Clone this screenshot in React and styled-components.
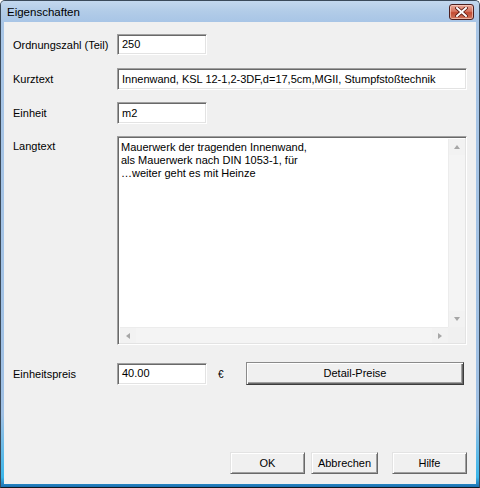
import React from "react";
import styled, { createGlobalStyle, css } from "styled-components";

const GlobalStyle = createGlobalStyle`
  html, body { margin: 0; padding: 0; background: #fff; }
  body { font-family: "Liberation Sans", Arial, sans-serif; }
  * { box-sizing: border-box; }
`;

const Window = styled.div`
  width: 480px;
  height: 488px;
  display: flex;
  flex-direction: column;
  background: linear-gradient(to bottom, #a9c6e6 0%, #9fc0e4 85%, #3ab6ea 98%, #1c6fb0 100%);
  border: 1px solid #3b4a5a;
  border-bottom-color: #101820;
  border-radius: 5px 5px 0 0;
  overflow: hidden;
`;

const TitleBar = styled.div`
  height: 21px;
  flex: none;
  display: flex;
  align-items: center;
  justify-content: space-between;
  padding: 0 5px 0 6px;
  background: linear-gradient(to bottom, #c3d8ee 0%, #b2cce8 50%, #a8c5e6 100%);
`;

const TitleText = styled.span`
  font-size: 11.5px;
  color: #000;
`;

const CloseButton = styled.div`
  width: 25px;
  height: 16px;
  margin-top: 1px;
  border: 1px solid #4c1f1f;
  border-radius: 3px;
  background: linear-gradient(to bottom, #e8a898 0%, #d6745f 45%, #c24a32 55%, #d0785e 100%);
  display: flex;
  align-items: center;
  justify-content: center;
  box-shadow: inset 0 0 0 1px rgba(255, 220, 210, 0.6);
`;

const Body = styled.div`
  flex: 1;
  margin: 0 3px 3px 3px;
  background: #f0f0f0;
  padding: 12px 9px 0 9px;
  display: flex;
  flex-direction: column;
  font-size: 11px;
  color: #000;
`;

const Row = styled.div`
  display: flex;
  align-items: ${(p) => (p.$top ? "flex-start" : "center")};
  margin-top: ${(p) => p.$gap || 0}px;
`;

const Label = styled.div`
  width: 104px;
  flex: none;
  padding-top: ${(p) => (p.$top ? 4 : 0)}px;
`;

const sunken = css`
  border-style: solid;
  border-width: 1px;
  border-color: #a0a0a0 #ffffff #ffffff #a0a0a0;
  box-shadow: inset 1px 1px 0 #696969, inset -1px -1px 0 #e3e3e3;
  background: #fff;
`;

const Field = styled.div`
  ${sunken}
  height: ${(p) => p.$h || 22}px;
  width: ${(p) => (p.$w ? `${p.$w}px` : "auto")};
  flex: ${(p) => (p.$w ? "none" : 1)};
  display: flex;
  align-items: center;
  padding: 0 4px 1px 4px;
  white-space: nowrap;
  overflow: hidden;
`;

const Memo = styled.div`
  ${sunken}
  flex: 1;
  height: 209px;
  display: grid;
  grid-template-columns: 1fr 17px;
  grid-template-rows: 1fr 16px;
  padding: 2px 1px 1px 2px;
`;

const MemoText = styled.div`
  padding: 2px 0 0 1px;
  line-height: 13px;
  white-space: pre;
  overflow: hidden;
`;

const VScroll = styled.div`
  background: #f4f4f4;
  display: flex;
  flex-direction: column;
  justify-content: space-between;
  border-left: 1px solid #ececec;
`;

const HScroll = styled.div`
  background: #f4f4f4;
  display: flex;
  justify-content: space-between;
  border-top: 1px solid #ececec;
`;

const Corner = styled.div`
  background: #f0f0f0;
`;

const ArrowBtn = styled.div`
  width: 16px;
  height: ${(p) => (p.$h ? 15 : 16)}px;
  display: flex;
  align-items: center;
  justify-content: center;
  background: #f2f2f2;
`;

const Tri = styled.span`
  width: 0;
  height: 0;
  border-style: solid;
  ${(p) =>
    p.$dir === "up" &&
    css`border-width: 0 3.5px 4px 3.5px; border-color: transparent transparent #a6a6a6 transparent;`}
  ${(p) =>
    p.$dir === "down" &&
    css`border-width: 4px 3.5px 0 3.5px; border-color: #a6a6a6 transparent transparent transparent;`}
  ${(p) =>
    p.$dir === "left" &&
    css`border-width: 3.5px 4px 3.5px 0; border-color: transparent #a6a6a6 transparent transparent;`}
  ${(p) =>
    p.$dir === "right" &&
    css`border-width: 3.5px 0 3.5px 4px; border-color: transparent transparent transparent #a6a6a6;`}
`;

const Euro = styled.span`
  width: 39px;
  flex: none;
  padding-left: 11px;
  padding-top: 2px;
  font-size: 10px;
`;

const Button = styled.button`
  font-family: "Liberation Sans", Arial, sans-serif;
  font-size: 11px;
  color: #000;
  background: #f0f0f0;
  height: ${(p) => p.$h || 22}px;
  width: ${(p) => (p.$w ? `${p.$w}px` : "auto")};
  flex: none;
  margin-left: ${(p) => p.$ml || 0}px;
  margin-right: ${(p) => p.$mr || 0}px;
  padding: 0 0 1px 0;
  border-style: solid;
  border-width: 1px;
  border-color: #e3e3e3 #696969 #696969 #e3e3e3;
  box-shadow: inset 1px 1px 0 #fff, inset -1px -1px 0 #a0a0a0;
  ${(p) =>
    p.$default &&
    css`
      border: 1px solid #3c3c3c;
      border-left-color: #8a8a8a;
      border-top-color: #8a8a8a;
      box-shadow: inset 1px 1px 0 #fff, inset -1px -1px 0 #696969, inset -2px -2px 0 #a0a0a0;
    `}
`;

const ButtonBar = styled.div`
  display: flex;
  justify-content: flex-end;
  margin-top: 67px;
`;

function CloseIcon() {
  return (
    <svg width="13" height="10" viewBox="0 0 13 10">
      <path
        d="M2 1 L11 9 M11 1 L2 9"
        stroke="#5a1a14"
        strokeWidth="3.6"
        strokeLinecap="square"
      />
      <path
        d="M2 1 L11 9 M11 1 L2 9"
        stroke="#ffffff"
        strokeWidth="2"
        strokeLinecap="square"
      />
    </svg>
  );
}

export default function App() {
  const lang =
    "Mauerwerk der tragenden Innenwand,\nals Mauerwerk nach DIN 1053-1, für\n…weiter geht es mit Heinze";
  return (
    <>
      <GlobalStyle />
      <Window>
        <TitleBar>
          <TitleText>Eigenschaften</TitleText>
          <CloseButton>
            <CloseIcon />
          </CloseButton>
        </TitleBar>
        <Body>
          <Row>
            <Label>Ordnungszahl (Teil)</Label>
            <Field $w={90} $h={21}>250</Field>
          </Row>
          <Row $gap={13}>
            <Label>Kurztext</Label>
            <Field>Innenwand, KSL 12-1,2-3DF,d=17,5cm,MGII, Stumpfstoßtechnik</Field>
          </Row>
          <Row $gap={12}>
            <Label>Einheit</Label>
            <Field $w={90}>m2</Field>
          </Row>
          <Row $gap={12} $top>
            <Label $top>Langtext</Label>
            <Memo>
              <MemoText>{lang}</MemoText>
              <VScroll>
                <ArrowBtn>
                  <Tri $dir="up" />
                </ArrowBtn>
                <ArrowBtn>
                  <Tri $dir="down" />
                </ArrowBtn>
              </VScroll>
              <HScroll>
                <ArrowBtn $h>
                  <Tri $dir="left" />
                </ArrowBtn>
                <ArrowBtn $h>
                  <Tri $dir="right" />
                </ArrowBtn>
              </HScroll>
              <Corner />
            </Memo>
          </Row>
          <Row $gap={17}>
            <Label>Einheitspreis</Label>
            <Field $w={90}>40.00</Field>
            <Euro>€</Euro>
            <Button $default $h={23} $w={218} $mr={3}>Detail-Preise</Button>
          </Row>
          <ButtonBar>
            <Button $w={75}>OK</Button>
            <Button $w={67} $ml={6}>Abbrechen</Button>
            <Button $w={75} $ml={14}>Hilfe</Button>
          </ButtonBar>
        </Body>
      </Window>
    </>
  );
}
